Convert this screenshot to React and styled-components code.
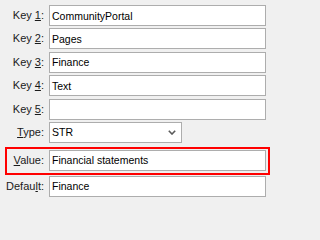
import React from 'react';
import styled, { createGlobalStyle } from 'styled-components';

const GlobalStyle = createGlobalStyle`
    html, body {
        margin: 0;
        padding: 0;
        background: #f0f0f0;
    }
    body {
        font-family: "Liberation Sans", Arial, sans-serif;
        font-size: 11px;
        color: #000;
    }
`

const Form = styled.div`
    width: 271px;
    height: 202px;
    box-sizing: border-box;
    padding: 5px 5px 0 0;
    display: flex;
    flex-direction: column;
`

const Row = styled.div`
    display: flex;
    align-items: center;
    gap: 5px;
    height: 21px;
    margin-top: ${props => props.$top || 0}px;
`

const Label = styled.label`
    width: ${props => props.$width || 44}px;
    flex-shrink: 0;
    text-align: right;
    white-space: nowrap;
    line-height: 13px;
    color: #1a1a1a;

    u {
        text-decoration-thickness: 1px;
        text-underline-offset: 1px;
    }
`

const Field = styled.div`
    flex: 1;
    height: 21px;
    box-sizing: border-box;
    border: 1px solid #adadad;
    background: #fff;
    padding: 0 2px 0 2px;
    display: flex;
    align-items: center;
    font-size: 10.5px;
    white-space: nowrap;
    overflow: hidden;
`

const Select = styled.div`
    width: 133px;
    height: 21px;
    box-sizing: border-box;
    border: 1px solid #adadad;
    background: #fff;
    padding: 0 5px 0 2px;
    display: flex;
    align-items: center;
    justify-content: space-between;
    font-size: 10.5px;
`

const Highlight = styled.div`
    margin: 4px -4px 0 5px;
    border: 2px solid #ff0000;
    padding: 1px 2px 2px 0;
`

const Chevron = () => (
    <svg width="8" height="5" viewBox="0 0 8 5">
        <path d="M0.8 0.8 L4 4 L7.2 0.8" fill="none" stroke="#5a5a5a" strokeWidth="1.6" />
    </svg>
)

const keys = [
    { n: '1', value: 'CommunityPortal' },
    { n: '2', value: 'Pages' },
    { n: '3', value: 'Finance' },
    { n: '4', value: 'Text' },
    { n: '5', value: '' },
]

const App = () => {
    return (
        <>
            <GlobalStyle />
            <Form>
                {keys.map((k, i) => (
                    <Row key={k.n} $top={i === 0 ? 0 : 2.4}>
                        <Label>Key <u>{k.n}</u>:</Label>
                        <Field>{k.value}</Field>
                    </Row>
                ))}
                <Row $top={2.4}>
                    <Label><u>T</u>ype:</Label>
                    <Select>
                        <span>STR</span>
                        <Chevron />
                    </Select>
                </Row>
                <Highlight>
                    <Row>
                        <Label $width={37}><u>V</u>alue:</Label>
                        <Field>Financial statements</Field>
                    </Row>
                </Highlight>
                <Row $top={1}>
                    <Label>Defau<u>l</u>t:</Label>
                    <Field>Finance</Field>
                </Row>
            </Form>
        </>
    )
}

export default App;
